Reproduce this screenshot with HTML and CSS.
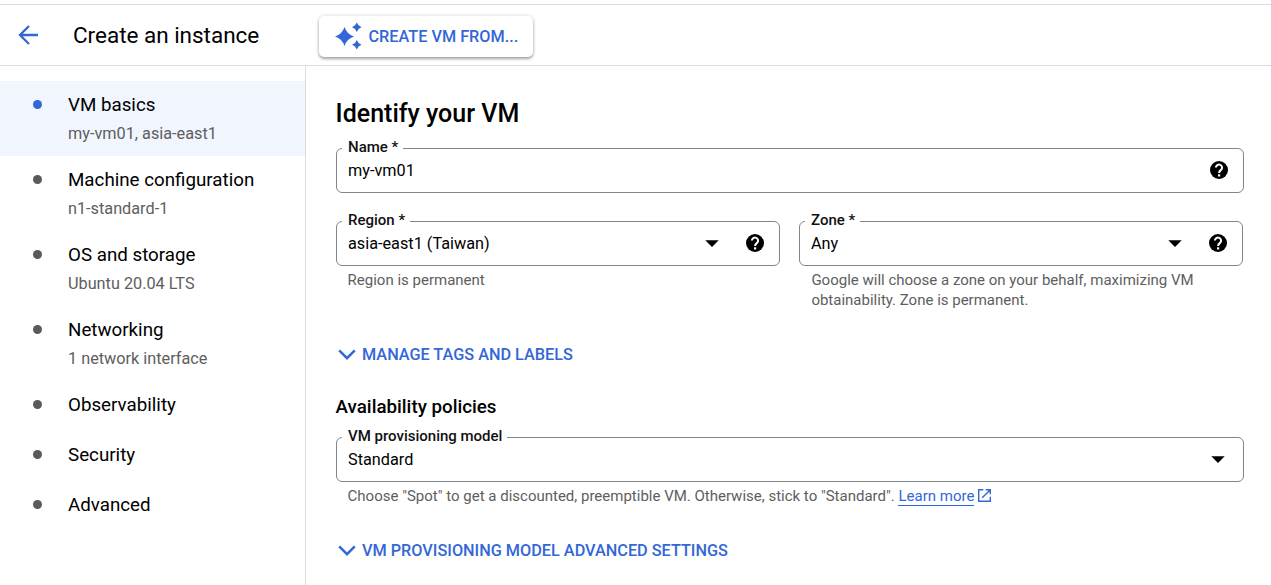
FILE: index.html
```html
<!DOCTYPE html>
<html lang="en">
<head>
<meta charset="utf-8">
<title>Create an instance</title>
<link rel="stylesheet" href="styles.css">
</head>
<body>
<svg class="defs" width="0" height="0" aria-hidden="true">
  <symbol id="help" viewBox="0 0 18 18"><circle cx="9" cy="9" r="9"/><path d="M5.9 6.6a3.1 3 0 1 1 5.2 2.2C9.8 9.8 9.1 10.3 9.1 12" fill="none" stroke="#fff" stroke-width="2"/><path d="M8 13.3h2.2v2.2H8z" fill="#fff"/></symbol>
  <symbol id="caret" viewBox="0 0 14 7"><path d="M0.3 0.3h13.4L7 7z"/></symbol>
  <symbol id="chevron" viewBox="0 0 18 12"><path d="M1.2 1.4L9 9.2l7.8-7.8" fill="none" stroke="currentColor" stroke-width="2.5"/></symbol>
</svg>
<header class="header">
  <svg class="back" viewBox="0 0 20 20"><path d="M20 10H2M11 1L2 10l9 9" fill="none" stroke="currentColor" stroke-width="2.3"/></svg>
  <h1 class="title">Create an instance</h1>
  <button class="create">
    <svg class="spark" viewBox="0 0 28 28"><path d="M9.5 5Q11.8 12.2 19 14.5 11.8 16.8 9.5 24 7.2 16.8 0 14.5 7.2 12.2 9.5 5zM21.8 .5Q23 4 26.5 5.2 23 6.4 21.8 9.9 20.6 6.4 17.1 5.2 20.6 4 21.8 .5zM21.8 18Q23 21.5 26.5 22.7 23 23.9 21.8 27.4 20.6 23.9 17.1 22.7 20.6 21.5 21.8 18z"/></svg>
    <span>CREATE VM FROM...</span>
  </button>
</header>
<div class="layout">
  <nav class="nav">
    <div class="item active"><i class="dot"></i><div><div class="name">VM basics</div><div class="sub">my-vm01, asia-east1</div></div></div>
    <div class="item"><i class="dot"></i><div><div class="name">Machine configuration</div><div class="sub">n1-standard-1</div></div></div>
    <div class="item"><i class="dot"></i><div><div class="name">OS and storage</div><div class="sub">Ubuntu 20.04 LTS</div></div></div>
    <div class="item"><i class="dot"></i><div><div class="name">Networking</div><div class="sub">1 network interface</div></div></div>
    <div class="item"><i class="dot"></i><div class="name">Observability</div></div>
    <div class="item"><i class="dot"></i><div class="name">Security</div></div>
    <div class="item"><i class="dot"></i><div class="name">Advanced</div></div>
  </nav>
  <main class="main">
    <h2 class="heading">Identify your VM</h2>
    <fieldset class="field">
      <legend>Name *</legend>
      <div class="control"><span class="value">my-vm01</span><svg class="help"><use href="#help"/></svg></div>
    </fieldset>
    <div class="pair">
      <div>
        <fieldset class="field">
          <legend>Region *</legend>
          <div class="control"><span class="value">asia-east1 (Taiwan)</span><svg class="caret"><use href="#caret"/></svg><svg class="help"><use href="#help"/></svg></div>
        </fieldset>
        <p class="hint">Region is permanent</p>
      </div>
      <div>
        <fieldset class="field">
          <legend>Zone *</legend>
          <div class="control"><span class="value">Any</span><svg class="caret"><use href="#caret"/></svg><svg class="help"><use href="#help"/></svg></div>
        </fieldset>
        <p class="hint zone-hint">Google will choose a zone on your behalf, maximizing VM<br>obtainability. Zone is permanent.</p>
      </div>
    </div>
    <div class="expander tags"><svg class="chevron"><use href="#chevron"/></svg><span>MANAGE TAGS AND LABELS</span></div>
    <h3 class="subheading">Availability policies</h3>
    <fieldset class="field">
      <legend>VM provisioning model</legend>
      <div class="control"><span class="value">Standard</span><svg class="caret"><use href="#caret"/></svg></div>
    </fieldset>
    <p class="hint">Choose "Spot" to get a discounted, preemptible VM. Otherwise, stick to "Standard". <a class="link">Learn more</a><svg class="external" viewBox="0 0 13 13"><path d="M5.3 .7H.7v11.6h11.6V7.7M7.8 .7h4.5v4.5M12.1 .9L4.2 8.8" fill="none" stroke="currentColor" stroke-width="1.4"/></svg></p>
    <div class="expander advanced"><svg class="chevron"><use href="#chevron"/></svg><span>VM PROVISIONING MODEL ADVANCED SETTINGS</span></div>
  </main>
</div>
</body>
</html>
```
FILE: styles.css
```css
* { box-sizing: border-box; }
body { margin: 0; height: 585px; overflow: hidden; padding-top: 4px; background: #fff; color: #000; font-family: Roboto, sans-serif; }
h1, h2, h3, p { margin: 0; }
svg { display: block; flex: none; fill: currentColor; }
.defs { display: none; }
.header { height: 62px; border-top: 1px solid #dadce0; border-bottom: 1px solid #dadce0; display: flex; align-items: center; padding-left: 18px; }
.back { width: 20px; height: 20px; color: #3367d6; }
.title { width: 246px; margin-left: 35px; font-size: 22.5px; font-weight: 400; line-height: 30px; letter-spacing: -.02px; }
.create { width: 214px; height: 41px; margin-top: 2px; padding: 0 0 0 16px; display: flex; align-items: center; gap: 5.5px; border: 0; border-radius: 5px; background: #fff; color: #3367d6; box-shadow: 0 2px 3px rgba(0,0,0,.32), 0 0 4px rgba(0,0,0,.14); font: 500 16.25px/24px Roboto, sans-serif; white-space: nowrap; }
.create span { padding-top: 1px; }
.spark { width: 28px; height: 28px; }
.layout { display: flex; height: 519px; }
.nav { width: 306px; flex: none; padding-top: 15px; border-right: 1px solid #dadce0; }
.item { display: flex; gap: 26.5px; padding: 12px 0 0 32.5px; height: 50px; }
.item:has(.sub) { height: 75px; }
.active { background: #f0f5fe; }
.dot { width: 9px; height: 9px; margin-top: 6.7px; flex: none; border-radius: 50%; background: #5a5a5a; }
.active .dot { background: #3367d6; }
.name { font-size: 18.75px; line-height: 25px; }
.sub { margin-top: 6px; font-size: 16.25px; line-height: 20px; color: #5e5e5e; }
.main { flex: 1; padding: 32px 27px 0 30px; }
.heading { margin-left: -.4px; font-size: 25px; font-weight: 500; line-height: 32px; }
.field { margin: 9px 0 0; padding: 0; height: 54px; min-width: 0; border: 1px solid #80868b; border-radius: 6px; }
.field legend { margin-left: 5px; padding: 0 5px 3px 6px; height: 19px; font-size: 15px; font-weight: 500; line-height: 16px; color: #111; }
.control { height: 34px; padding: 0 15px 9px 11px; display: flex; align-items: center; }
.value { flex: 1; font-size: 16.25px; line-height: 24px; }
.help { width: 18px; height: 18px; margin: -1px -.3px 0 27px; }
.caret { width: 14px; height: 7px; margin-right: 3px; }
.caret + .help { margin-left: 24px; }
.pair { display: grid; grid-template-columns: 444px 444px; gap: 19px; margin-top: 19px; }
.pair .field { margin: 0; }
.hint { display: flow-root; margin: 4px 0 0 11.6px; font-size: 15px; line-height: 20px; color: #5e5e5e; white-space: nowrap; }
.zone-hint { margin-left: 12.4px; }
.link { color: #3367d6; border-bottom: 1px solid #3367d6; }
.external { display: inline-block; width: 13px; height: 13px; margin-left: 4px; vertical-align: -1px; color: #3367d6; }
.expander { display: flex; align-items: center; gap: 6px; padding-left: 2px; height: 24px; font-size: 16.25px; font-weight: 500; line-height: 24px; color: #3367d6; }
.chevron { width: 18px; height: 12px; }
.tags { margin-top: 33px; }
.subheading { margin: 27px 0 0 -.4px; font-size: 18.75px; font-weight: 500; line-height: 26px; }
.subheading + .field { margin-top: 8px; }
.advanced { margin-top: 33px; }
```
